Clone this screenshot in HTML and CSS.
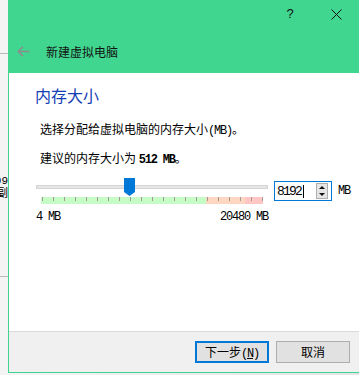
FILE: index.html
```html
<!DOCTYPE html>
<html>
<head>
    <title>新建虚拟电脑</title>
    <link rel="stylesheet" href="styles.css">
</head>
<body>

    <div class="backdrop">
        <div class="back-line first"></div>
        <div class="back-text one">09</div>
        <div class="back-text">副</div>
        <div class="back-line second"></div>
    </div>

    <div class="dialog">
        <header class="dlg-head">
            <div class="caption">
                <span class="cap-btn help">?</span>
                <span class="cap-btn">
                    <svg width="11" height="11" viewBox="0 0 11 11"><path d="M0.5 0.5L10.5 10.5M10.5 0.5L0.5 10.5" stroke="#111" stroke-width="1" fill="none"/></svg>
                </span>
            </div>
            <div class="title-row">
                <svg class="back" width="13" height="11" viewBox="0 0 13 11"><path d="M6 0.8L1.3 5.5L6 10.2M1.3 5.5H12.5" stroke="#8c8c8c" stroke-width="1.6" fill="none"/></svg>
                <span class="title">新建虚拟电脑</span>
            </div>
        </header>

        <main class="page">
            <h2>内存大小</h2>
            <p class="line first">选择分配给虚拟电脑的内存大小<span class="m">(MB)</span>。</p>
            <p class="line">建议的内存大小为 <b class="m">512 MB</b>。</p>

            <div class="mem-row">
                <div class="slider">
                    <div class="track">
                        <div class="groove"></div>
                        <svg class="handle" width="11" height="18" viewBox="0 0 11 18"><polygon points="0,0 11,0 11,14 5.5,18 0,14" fill="#0078d7"/></svg>
                    </div>
                    <div class="ticks"></div>
                    <div class="scale">
                        <span class="m">4 MB</span>
                        <span class="m">20480 MB</span>
                    </div>
                </div>

                <div class="spin">
                    <span class="value m">8192</span><span class="caret"></span>
                    <div class="arrows">
                        <div class="arrow up"></div>
                        <div class="arrow down"></div>
                    </div>
                </div>
                <span class="unit m">MB</span>
            </div>
        </main>

        <footer class="dlg-foot">
            <button class="btn primary">下一步<span class="m">(<u>N</u>)</span></button>
            <button class="btn">取消</button>
        </footer>
    </div>

</body>
</html>
```

FILE: styles.css
```css
body {
    margin: 0;
    height: 375px;
    overflow: hidden;
    display: flex;
    align-items: flex-start;
    font-family: "Noto Sans CJK SC", sans-serif;
    font-size: 12px;
    color: #000;
    background: linear-gradient(to right, #f4f4f4, #e4e4e4);
}

.m {
    font-family: "Liberation Mono", monospace;
    letter-spacing: -1.2px;
}

/* window behind the dialog */
.backdrop {
    width: 8px;
    flex: none;
    display: flex;
    flex-direction: column;
    overflow: hidden;
}

.back-line {
    height: 1px;
    background: #b9b9b9;
}

.back-line.first {
    margin-top: 53px;
}

.back-line.second {
    margin-top: 76px;
}

.back-text {
    display: flex;
    justify-content: flex-end;
    white-space: nowrap;
    line-height: 12px;
    height: 12px;
    font-size: 11px;
    font-family: "Liberation Mono", "Noto Sans CJK SC", monospace;
}

.back-text.one {
    margin-top: 121px;
    margin-bottom: 1px;
}

/* dialog */
.dialog {
    width: 350px;
    flex: none;
    border-left: 1px solid #3fd58e;
    border-bottom: 1px solid #3fd58e;
    background: white;
}

.dlg-head {
    height: 73px;
    background: #41d68f;
}

.caption {
    display: flex;
    justify-content: flex-end;
    height: 27px;
}

.cap-btn {
    width: 46px;
    display: flex;
    align-items: center;
    justify-content: center;
    padding-top: 1px;
}

.cap-btn.help {
    font-family: "Liberation Sans", sans-serif;
    font-size: 13px;
    color: #111;
    padding-top: 0;
}

.title-row {
    height: 46px;
    display: flex;
    align-items: center;
    padding-top: 3px;
    box-sizing: border-box;
}

.back {
    margin-left: 8px;
}

.title {
    margin-left: 16px;
    color: #111;
}

.page {
    height: 258px;
    padding: 12px 0 0 26px;
    box-sizing: border-box;
}

h2 {
    margin: 0;
    font-size: 16px;
    line-height: 20px;
    font-weight: normal;
    color: #1440b4;
}

.line {
    margin: 11px 0 0 5px;
    line-height: 16px;
}

.line.first {
    margin-top: 16px;
}

.line b {
    font-weight: bold;
}

.mem-row {
    display: flex;
    align-items: flex-start;
    margin-top: 10px;
}

.slider {
    width: 232px;
    margin-left: 1px;
}

.track {
    position: relative;
    height: 19px;
}

.groove {
    position: relative;
    top: 7px;
    height: 2px;
    background: #e6e6e6;
    border: 1px solid #d4d4d4;
}

.handle {
    position: absolute;
    left: 88px;
    top: 0;
}

.ticks {
    margin-left: 5px;
    width: 222px;
    height: 7px;
    background:
        repeating-linear-gradient(to right, transparent 0 1px, #a09a90 1px 2px, transparent 2px 11px) top left / 100% 4px no-repeat,
        linear-gradient(to right, #c6fcc6 0 165px, #ffd6c2 165px 204px, #ffc6c4 204px);
}

.scale {
    display: flex;
    justify-content: space-between;
    margin-top: 7px;
    line-height: 12px;
}

.spin {
    margin: 3px 0 0 6px;
    width: 58px;
    height: 20px;
    box-sizing: border-box;
    border: 1px solid #0078d7;
    display: flex;
    align-items: center;
    padding-left: 2px;
}

.value {
    font-size: 13px;
    letter-spacing: -1.8px;
}

.caret {
    width: 1px;
    height: 13px;
    background: #000;
    margin-left: 2px;
}

.arrows {
    margin-left: auto;
    margin-right: 3px;
    width: 12px;
    height: 16px;
    box-sizing: border-box;
    border: 1px solid #adadad;
    background: #e5e5e5;
    display: flex;
    flex-direction: column;
}

.arrow {
    flex: 1;
    display: flex;
    align-items: center;
    justify-content: center;
}

.arrow::after {
    content: "";
    border-left: 3px solid transparent;
    border-right: 3px solid transparent;
}

.arrow.up::after {
    border-bottom: 3px solid #111;
}

.arrow.down::after {
    border-top: 3px solid #111;
}

.unit {
    margin: 6px 0 0 6px;
    line-height: 14px;
}

.dlg-foot {
    height: 41px;
    box-sizing: border-box;
    border-top: 1px solid #dadada;
    background: #f0f0f0;
    display: flex;
    justify-content: flex-end;
    gap: 7px;
    padding: 9px 9px 0 0;
}

.btn {
    width: 74px;
    height: 22px;
    box-sizing: border-box;
    border: 1px solid #adadad;
    background: #e1e1e1;
    font-family: "Noto Sans CJK SC", sans-serif;
    font-size: 12px;
    color: #000;
    padding: 0;
    line-height: 18px;
}

.btn.primary {
    border: 2px solid #0078d7;
}
```
